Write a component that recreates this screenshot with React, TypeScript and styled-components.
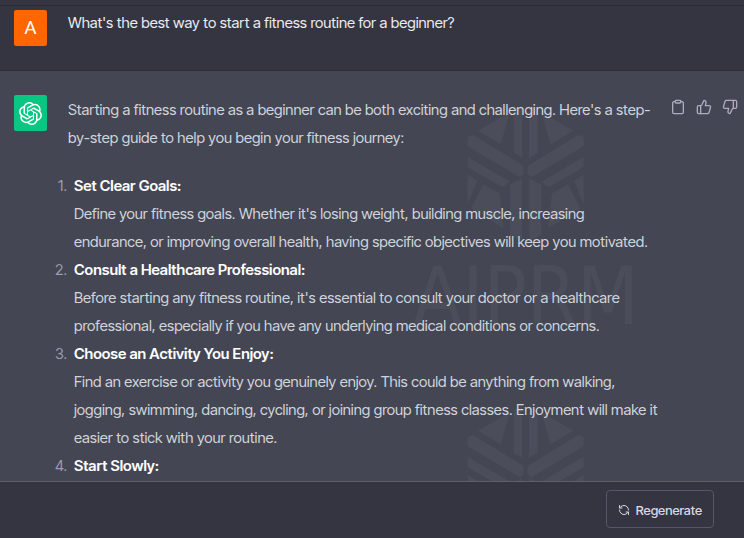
import React from "react";
import styled, { createGlobalStyle } from "styled-components";
import { Clipboard, RefreshCcw, ThumbsDown, ThumbsUp } from "lucide-react";
import { SiOpenai } from "react-icons/si";

const GlobalStyle = createGlobalStyle`
  * {
    box-sizing: border-box;
  }
  body {
    margin: 0;
    background: #343541;
    color: #d1d5db;
    font-family: "Inter Tight", Inter, "Liberation Sans", sans-serif;
    font-size: 15px;
    line-height: 28px;
  }
  p, ol {
    margin: 0;
    padding: 0;
  }
`;

const Page = styled.main`
  display: flex;
  flex-direction: column;
  height: 100vh;
  overflow: hidden;
`;

const Turn = styled.section`
  display: flex;
  flex: none;
  align-items: flex-start;
  gap: 21px;
  margin-top: 5px;
  padding: 4px 14px 24px;
  border-top: 1px solid #2b2c36;
  border-bottom: 1px solid #2b2c36;
  color: #ececf1;
`;

const Answer = styled.section`
  position: relative;
  display: flex;
  flex: 1;
  align-items: flex-start;
  min-height: 0;
  padding: 24px 6px 0 14px;
  overflow: hidden;
  background: #444654;
`;

const Avatar = styled.div<{ $color: string }>`
  display: grid;
  flex: none;
  place-items: center;
  width: 33px;
  height: 36px;
  border-radius: 2px;
  background: ${(p) => p.$color};
  color: #fff;
  font-family: Roboto, sans-serif;
  font-size: 19px;
`;

const Question = styled.p`
  line-height: 26px;
`;

const Prose = styled.div`
  position: relative;
  flex: 1;
  margin: 1px 6px 0 21px;
`;

const Steps = styled.ol`
  margin: 20px 0 0 -15px;
  list-style: none;
`;

const Step = styled.li`
  display: grid;
  grid-template-columns: 14px 1fr;
  gap: 7px;
`;

const Marker = styled.span`
  justify-self: end;
  color: #9b9dab;
`;

const Title = styled.strong`
  display: block;
  color: #fff;
  font-weight: 600;
`;

const Description = styled.p`
  white-space: pre-line;
`;

const Actions = styled.div`
  position: relative;
  display: flex;
  flex: none;
  gap: 10px;
  padding-top: 4px;
`;

const IconButton = styled.button`
  display: flex;
  padding: 0;
  border: 0;
  background: none;
  color: #acacbe;
  cursor: pointer;
`;

const Footer = styled.footer`
  display: flex;
  flex: none;
  justify-content: flex-end;
  padding: 8px 30px 10px;
  border-top: 1px solid #5d5e6b;
`;

const RegenerateButton = styled.button`
  display: flex;
  align-items: center;
  gap: 6px;
  height: 38px;
  padding: 2px 11px 0;
  border: 1px solid #565869;
  border-radius: 4px;
  background: #343541;
  color: #d9d9e3;
  font-family: inherit;
  font-size: 13px;
  font-weight: 500;
  cursor: pointer;
`;

const Watermarks = styled.div`
  position: absolute;
  top: 24px;
  right: 99px;
  width: 240px;
`;

const WatermarkTile = styled.svg`
  display: block;
  width: 240px;
  height: 300px;
  fill: #4b4d5a;
`;

const facets = [
  "54,107 122,148 150,52",
  "161,45 187,30 187,188 161,173",
  "23,127 38,119 190,212 192,236 180,247 23,154",
  "23,185 150,260 128,277 23,217",
  "23,240 52,257 23,328",
  "70,268 118,295 130,400 33,340",
  "150,268 186,250 186,440 150,420",
];

function Watermark({ label }: { label?: string }) {
  const half = facets.map((points) => <polygon key={points} points={points} />);
  return (
    <WatermarkTile viewBox="0 0 240 300" aria-hidden="true">
      <g transform="translate(55 0) scale(0.3333)">
        {half}
        <g transform="translate(394 0) scale(-1 1)">{half}</g>
      </g>
      {label && (
        <text x="8" y="229" fontFamily="'DejaVu Sans Condensed', 'DejaVu Sans', sans-serif" fontSize="80">
          {label}
        </text>
      )}
    </WatermarkTile>
  );
}

const steps = [
  {
    title: "Set Clear Goals:",
    text: "Define your fitness goals. Whether it's losing weight, building muscle, increasing\nendurance, or improving overall health, having specific objectives will keep you motivated.",
  },
  {
    title: "Consult a Healthcare Professional:",
    text: "Before starting any fitness routine, it's essential to consult your doctor or a healthcare professional, especially if you have any underlying medical conditions or concerns.",
  },
  {
    title: "Choose an Activity You Enjoy:",
    text: "Find an exercise or activity you genuinely enjoy. This could be anything from walking, jogging, swimming, dancing, cycling, or joining group fitness classes. Enjoyment will make it easier to stick with your routine.",
  },
  { title: "Start Slowly:", text: "" },
];

export default function App() {
  return (
    <Page>
      <GlobalStyle />
      <Turn>
        <Avatar $color="#ff6600">A</Avatar>
        <Question>What's the best way to start a fitness routine for a beginner?</Question>
      </Turn>
      <Answer>
        <Watermarks>
          <Watermark label="AIPRM" />
          <Watermark />
        </Watermarks>
        <Avatar $color="#0bc683">
          <SiOpenai size={23} />
        </Avatar>
        <Prose>
          <p>
            Starting a fitness routine as a beginner can be both exciting and challenging. Here's a
            step-by-step guide to help you begin your fitness journey:
          </p>
          <Steps>
            {steps.map((step, index) => (
              <Step key={step.title}>
                <Marker>{index + 1}.</Marker>
                <div>
                  <Title>{step.title}</Title>
                  {step.text && <Description>{step.text}</Description>}
                </div>
              </Step>
            ))}
          </Steps>
        </Prose>
        <Actions>
          <IconButton aria-label="Copy">
            <Clipboard size={16} strokeWidth={2} />
          </IconButton>
          <IconButton aria-label="Good response">
            <ThumbsUp size={16} strokeWidth={2} />
          </IconButton>
          <IconButton aria-label="Bad response">
            <ThumbsDown size={16} strokeWidth={2} />
          </IconButton>
        </Actions>
      </Answer>
      <Footer>
        <RegenerateButton>
          <RefreshCcw size={12} strokeWidth={2} />
          Regenerate
        </RegenerateButton>
      </Footer>
    </Page>
  );
}
